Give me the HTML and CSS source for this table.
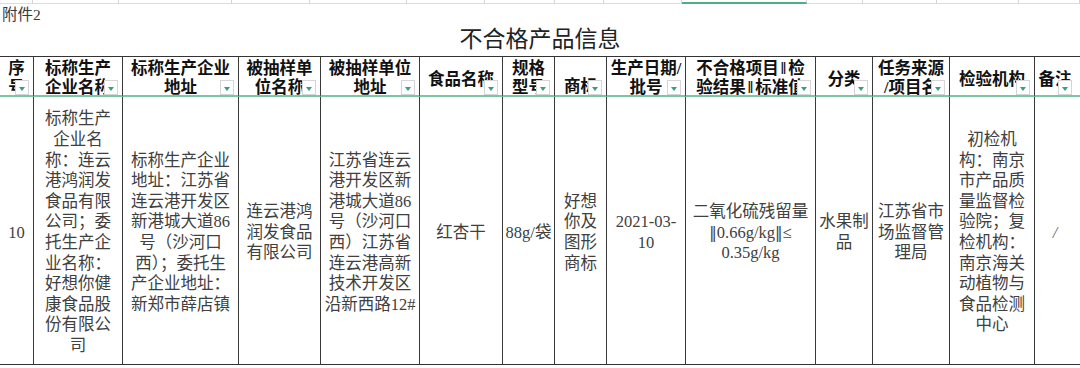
FILE: index.html
```html
<!DOCTYPE html>
<html lang="zh-CN">
<head>
<meta charset="utf-8">
<title>不合格产品信息</title>
<link rel="stylesheet" href="styles.css">
</head>
<body>
<div class="gridtop">
  <span></span><span></span><span></span><span></span><span></span><span></span><span></span><span></span><span></span><span class="sel"></span><span></span><span></span><span></span><span></span>
</div>
<div class="attach">附件2</div>
<h1 class="title">不合格产品信息</h1>
<table class="sheet">
  <colgroup>
    <col class="w1"><col class="w2"><col class="w3"><col class="w4"><col class="w5"><col class="w6"><col class="w7">
    <col class="w8"><col class="w9"><col class="w10"><col class="w11"><col class="w12"><col class="w13"><col class="w14">
  </colgroup>
  <thead>
    <tr>
      <th><div class="hd">序<br>号<span class="flt"></span></div></th>
      <th><div class="hd">标称生产<br>企业名称<span class="flt"></span></div></th>
      <th><div class="hd">标称生产企业<br>地址<span class="flt"></span></div></th>
      <th><div class="hd">被抽样单<br>位名称<span class="flt"></span></div></th>
      <th><div class="hd">被抽样单位<br>地址<span class="flt"></span></div></th>
      <th><div class="hd one">食品名称<span class="flt"></span></div></th>
      <th><div class="hd">规格<br>型号<span class="flt"></span></div></th>
      <th><div class="hd low">商标<span class="flt"></span></div></th>
      <th><div class="hd">生产日期/<br>批号<span class="flt"></span></div></th>
      <th><div class="hd">不合格项目<span class="hbar">‖</span>检<br>验结果<span class="hbar">‖</span>标准值<span class="flt"></span></div></th>
      <th><div class="hd one">分类<span class="flt"></span></div></th>
      <th><div class="hd">任务来源<br>/项目名<span class="flt"></span></div></th>
      <th><div class="hd one">检验机构<span class="flt"></span></div></th>
      <th><div class="hd one last">备注<span class="flt"></span></div></th>
    </tr>
  </thead>
  <tbody>
    <tr>
      <td>10</td>
      <td class="p7">标称生产企业名称：连云港鸿润发食品有限公司；委托生产企业名称：好想你健康食品股份有限公司</td>
      <td class="p6">标称生产企业地址：江苏省连云港开发区新港城大道86号（沙河口西）；委托生产企业地址：新郑市薛店镇</td>
      <td class="p6">连云港鸿润发食品有限公司</td>
      <td class="p3">江苏省连云港开发区新港城大道86号（沙河口西）江苏省连云港高新技术开发区沿新西路12#</td>
      <td>红杏干</td>
      <td class="p2">88g/袋</td>
      <td class="p2">好想你及图形商标</td>
      <td>2021-03-<br>10</td>
      <td>二氧化硫残留量<br><span class="dbl">‖</span>0.66g/kg<span class="dbl">‖</span>≤<br>0.35g/kg</td>
      <td class="p2">水果制品</td>
      <td class="p4">江苏省市场监督管理局</td>
      <td class="p6">初检机构：南京市产品质量监督检验院；复检机构：南京海关动植物与食品检测中心</td>
      <td class="lastc"><span class="slash">/</span></td>
    </tr>
  </tbody>
</table>
</body>
</html>
```
FILE: styles.css
```css
* { box-sizing: border-box; }
html, body { margin: 0; padding: 0; background: #fff; }
body {
  width: 1080px;
  height: 368px;
  overflow: hidden;
  font-family: "Liberation Serif", "Noto Sans CJK SC", serif;
  color: #333;
}

/* spreadsheet gridline strip at the very top */
.gridtop {
  display: grid;
  grid-template-columns: 33px 86px 113px 78px 97px 78px 70px 49px 78px 125px 56px 74px 82px 1fr;
  height: 4px;
}
.gridtop span {
  border-right: 1px solid #d4d4d4;
  border-bottom: 1px solid #dcdcdc;
}
.gridtop span.sel { border-bottom: 2px solid #4fae85; }

.attach {
  height: 22px;
  line-height: 21px;
  font-size: 15.5px;
  padding-left: 2px;
  color: #3a3a3a;
}
.title {
  margin: 0;
  height: 30px;
  line-height: 28px;
  font-size: 23px;
  font-weight: normal;
  text-align: center;
  color: #222;
}

/* the table */
.sheet {
  border-collapse: separate;
  border-spacing: 0;
  table-layout: fixed;
  width: 1080px;
}
.w1 { width: 34px; }
.w2 { width: 89px; }
.w3 { width: 116px; }
.w4 { width: 82px; }
.w5 { width: 99px; }
.w6 { width: 83px; }
.w7 { width: 52px; }
.w8 { width: 52px; }
.w9 { width: 79px; }
.w10 { width: 130px; }
.w11 { width: 57px; }
.w12 { width: 77px; }
.w13 { width: 85px; }
.w14 { width: 45px; }

.sheet th, .sheet td {
  padding: 0;
  border-right: 1px solid #3a3a3a;
}
.sheet tr > :last-child { border-right: none; }

.sheet th {
  border-top: 1px solid #333;
  border-bottom: 2px solid #7cc5a5;
  font-weight: bold;
  color: #111;
  font-size: 16.5px;
  vertical-align: top;
}
.hd {
  position: relative;
  height: 38px;
  padding-top: 2px;
  line-height: 19.4px;
  white-space: nowrap;
  text-align: center;
}
.hd.one { padding-top: 13px; }
.hd.low { padding-top: 20px; }
.hd.last { padding-right: 5px; }
.hbar { margin: 0 2px; }

/* excel filter drop-down button */
.flt {
  position: absolute;
  right: 4px;
  bottom: 0;
  width: 14px;
  height: 15px;
  background: #fff;
  border: 1px solid #d6d6d6;
}
.flt::after {
  content: "";
  position: absolute;
  left: 3px;
  top: 6px;
  border-left: 3.5px solid transparent;
  border-right: 3.5px solid transparent;
  border-top: 4px solid #2fa37a;
}
.hd.last .flt { right: 8px; }

.sheet td {
  border-bottom: 1px solid #333;
  height: 268px;
  padding-top: 5px;
  font-size: 16.5px;
  line-height: 20.6px;
  text-align: center;
  vertical-align: middle;
  color: #404040;
}
.sheet td.p2 { padding-left: 2px; padding-right: 2px; }
.sheet td.p3 { padding-left: 3px; padding-right: 3px; }
.sheet td.p4 { padding-left: 4px; padding-right: 4px; }
.sheet td.p6 { padding-left: 6px; padding-right: 6px; }
.sheet td.p7 { padding-left: 7px; padding-right: 7px; }
.sheet td.lastc { padding-right: 5px; }
.dbl { font-family: "DejaVu Sans", sans-serif; font-size: 15px; }
.slash { color: #666; font-style: italic; }
```
